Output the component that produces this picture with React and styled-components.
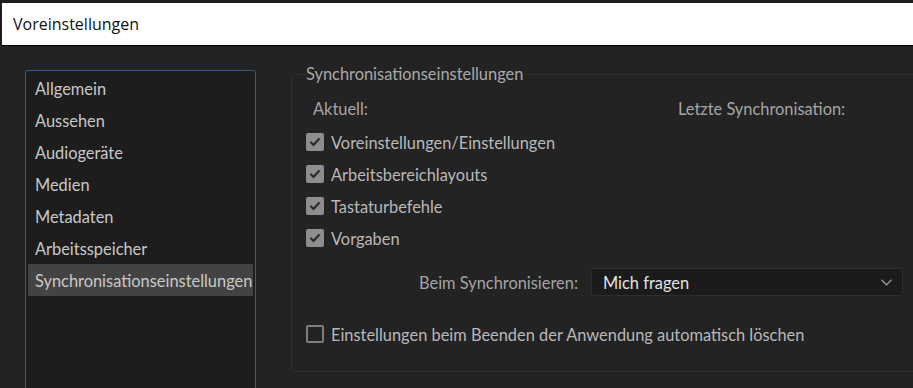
import React from 'react';
import styled, { createGlobalStyle } from 'styled-components';

const GlobalStyle = createGlobalStyle`
    html, body {
        margin: 0;
        padding: 0;
        background: #1e1e1e;
        overflow: hidden;
    }
    body {
        font-family: "Lato", "Noto Sans", sans-serif;
    }
`;

const Window = styled.div`
    height: 388px;
    padding-top: 3px;
    box-sizing: border-box;
    display: flex;
    flex-direction: column;
`;

const TitleBar = styled.div`
    height: 42px;
    margin-left: 2px;
    background: #ffffff;
    border-bottom: 1px solid #000000;
    display: flex;
    align-items: center;
    padding-left: 11px;
    font-family: "Open Sans", "Noto Sans", sans-serif;
    font-size: 16px;
    color: #111111;
`;

const Body = styled.div`
    flex: 1;
    background: #232323;
    display: flex;
    align-items: flex-start;
    gap: 35px;
    padding: 24px 0 0 25px;
    overflow: hidden;
`;

const Sidebar = styled.ul`
    list-style: none;
    margin: 0;
    width: 231px;
    height: 340px;
    box-sizing: border-box;
    padding: 1px 2px;
    background: #1d1d1d;
    border: 1px solid #2f5f96;
    border-radius: 3px;
    flex-shrink: 0;
`;

const Item = styled.li`
    height: 32px;
    display: flex;
    align-items: center;
    padding-left: 7px;
    font-size: 16.4px;
    color: #c8c8c8;
    background: ${props => props.active ? '#434343' : 'transparent'};
    white-space: nowrap;
`;

const Group = styled.fieldset`
    margin: 0;
    margin-top: -5px;
    width: 660px;
    height: 307px;
    box-sizing: border-box;
    border: 1px solid #303030;
    border-radius: 4px;
    padding: 0 0 0 14px;
    flex-shrink: 0;
`;

const Legend = styled.legend`
    padding: 0 3px 0 0;
    margin-left: 0;
    font-size: 16.4px;
    color: #a8a8a8;
    line-height: 18px;
`;

const HeadRow = styled.div`
    display: flex;
    height: 36px;
    align-items: center;
    margin-top: 7px;
    padding-left: 7px;
    font-size: 16.4px;
    color: #a6a6a6;
`;

const HeadLabel = styled.span`
    width: ${props => props.width || 'auto'};
`;

const CheckRow = styled.label`
    display: flex;
    align-items: center;
    gap: 7px;
    height: 32px;
    font-size: 16.4px;
    color: #b8b8b8;
    margin-top: ${props => props.top || '0'};
`;

const Box = styled.span`
    width: 18px;
    height: 18px;
    box-sizing: border-box;
    border-radius: 2px;
    display: flex;
    align-items: center;
    justify-content: center;
    background: ${props => props.checked ? '#8e8e8e' : 'transparent'};
    border: 2px solid ${props => props.checked ? '#8e8e8e' : '#7d7d7d'};
`;

const SelectRow = styled.div`
    display: flex;
    align-items: center;
    height: 28px;
    margin-top: 14px;
    padding-left: 113px;
    gap: 13px;
    font-size: 16.4px;
    color: #a4a4a4;
`;

const Select = styled.div`
    width: 312px;
    height: 28px;
    box-sizing: border-box;
    background: #1b1b1b;
    border: 1px solid #2e2e2e;
    border-radius: 3px;
    display: flex;
    align-items: center;
    justify-content: space-between;
    padding: 0 10px 0 11px;
    color: #e2e2e2;
`;

const Check = ({ checked }) => (
    <Box checked={checked}>
        {checked ? (
            <svg width="12" height="10" viewBox="0 0 12 10">
                <path d="M1.5 5 L4.5 8 L10.5 1.5" fill="none" stroke="#2a2a2a" strokeWidth="2.2" />
            </svg>
        ) : null}
    </Box>
);

const items = [
    'Allgemein',
    'Aussehen',
    'Audiogeräte',
    'Medien',
    'Metadaten',
    'Arbeitsspeicher',
    'Synchronisationseinstellungen',
];

const options = [
    'Voreinstellungen/Einstellungen',
    'Arbeitsbereichlayouts',
    'Tastaturbefehle',
    'Vorgaben',
];

const App = () => {
    return (
        <Window>
            <GlobalStyle />
            <TitleBar>Voreinstellungen</TitleBar>
            <Body>
                <Sidebar>
                    {items.map(item =>
                        <Item key={item} active={item === 'Synchronisationseinstellungen'}>{item}</Item>
                    )}
                </Sidebar>
                <Group>
                    <Legend>Synchronisationseinstellungen</Legend>
                    <HeadRow>
                        <HeadLabel width="365px">Aktuell:</HeadLabel>
                        <HeadLabel>Letzte Synchronisation:</HeadLabel>
                    </HeadRow>
                    {options.map(opt =>
                        <CheckRow key={opt}>
                            <Check checked />
                            {opt}
                        </CheckRow>
                    )}
                    <SelectRow>
                        Beim Synchronisieren:
                        <Select>
                            Mich fragen
                            <svg width="11" height="7" viewBox="0 0 11 7">
                                <path d="M0.5 0.8 L5.5 5.8 L10.5 0.8" fill="none" stroke="#9a9a9a" strokeWidth="1.3" />
                            </svg>
                        </Select>
                    </SelectRow>
                    <CheckRow top="22px">
                        <Check />
                        Einstellungen beim Beenden der Anwendung automatisch löschen
                    </CheckRow>
                </Group>
            </Body>
        </Window>
    );
};

export default App;
